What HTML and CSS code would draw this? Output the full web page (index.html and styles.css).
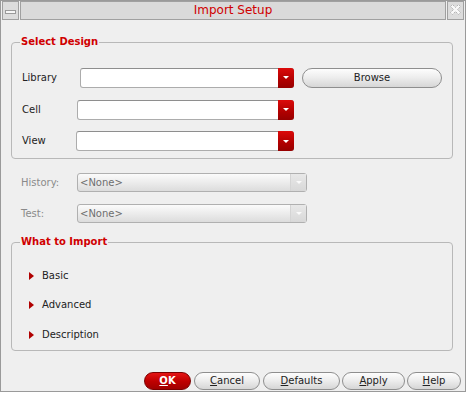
FILE: index.html
```html
<!DOCTYPE html>
<html lang="en">
<head>
    <meta charset="UTF-8">
    <title>Import Setup</title>
    <link rel="stylesheet" href="styles.css">
</head>
<body>
    <div class="window">
        <div class="titlebar">
            <div class="tb-btn">
                <svg width="15" height="17" viewBox="0 0 15 17">
                    <rect x="2.5" y="8.5" width="10" height="3" fill="#f6f6f6" stroke="#9a9a9a"/>
                </svg>
            </div>
            <div class="tb-title">Import Setup</div>
            <div class="tb-btn">
                <svg width="15" height="17" viewBox="0 0 15 17">
                    <polygon points="2.5,4.5 4.5,2.5 7.5,5.5 10.5,2.5 12.5,4.5 9.5,7.5 12.5,10.5 10.5,12.5 7.5,9.5 4.5,12.5 2.5,10.5 5.5,7.5" fill="#f8f8f8" stroke="#b4b4b4" stroke-dasharray="2 1"/>
                </svg>
            </div>
        </div>

        <div class="content">
            <fieldset class="group group-design">
                <legend>Select Design</legend>
                <div class="design-grid">
                    <label class="field-label">Library</label>
                    <div class="combo combo-library"><span class="combo-arrow"></span></div>
                    <button class="btn btn-browse">Browse</button>

                    <label class="field-label">Cell</label>
                    <div class="combo combo-cell"><span class="combo-arrow"></span></div>
                    <span></span>

                    <label class="field-label">View</label>
                    <div class="combo"><span class="combo-arrow"></span></div>
                    <span></span>
                </div>
            </fieldset>

            <div class="opt-rows">
                <div class="opt-row">
                    <label class="opt-label">History:</label>
                    <div class="combo-off"><span class="combo-off-text">&lt;None&gt;</span><span class="combo-off-arrow"></span></div>
                </div>
                <div class="opt-row">
                    <label class="opt-label">Test:</label>
                    <div class="combo-off"><span class="combo-off-text">&lt;None&gt;</span><span class="combo-off-arrow"></span></div>
                </div>
            </div>

            <fieldset class="group group-import">
                <legend>What to Import</legend>
                <ul class="sections">
                    <li><span class="marker"></span>Basic</li>
                    <li><span class="marker"></span>Advanced</li>
                    <li><span class="marker"></span>Description</li>
                </ul>
            </fieldset>
        </div>

        <div class="actions">
            <button class="btn btn-ok"><u>O</u>K</button>
            <button class="btn btn-cancel"><u>C</u>ancel</button>
            <button class="btn btn-defaults"><u>D</u>efaults</button>
            <button class="btn btn-apply"><u>A</u>pply</button>
            <button class="btn btn-help"><u>H</u>elp</button>
        </div>
    </div>
</body>
</html>
```

FILE: styles.css
```css
:root {
    --face: #efefef;
    --frame: #9a9a9a;
    --red: #d00000;
    --text: #222222;
    --muted: #8a8a8a;
    --group-border: #b8b8b8;
}

* {
    box-sizing: border-box;
}

body {
    margin: 0;
    background: #ffffff;
    font-family: "DejaVu Sans", sans-serif;
    font-size: 10px;
    color: var(--text);
}

.window {
    width: 466px;
    height: 392px;
    border: 1px solid var(--frame);
    background: var(--face);
    display: flex;
    flex-direction: column;
}

/* title bar */
.titlebar {
    display: flex;
    gap: 1px;
    height: 19px;
    padding: 0 1px;
}

.tb-btn {
    width: 17px;
    border: 1px solid #a0a0a0;
    background: #dcdcdc;
    display: flex;
    align-items: center;
    justify-content: center;
}

.tb-title {
    flex: 1;
    border: 1px solid #a0a0a0;
    background: #dadada;
    color: var(--red);
    font-size: 12px;
    line-height: 17px;
    text-align: center;
}

.content {
    padding: 0 12px 0 10px;
}

/* group boxes */
.group {
    margin: 16px 0 0;
    padding: 19px 10px 7px;
    border: 1px solid var(--group-border);
    border-radius: 4px;
    min-width: 0;
}

.group legend {
    margin-left: -2px;
    padding: 0 1px;
    font-weight: bold;
    line-height: 12px;
    color: var(--red);
}

.design-grid {
    display: grid;
    grid-template-columns: 54px 218px 148px;
    row-gap: 11.5px;
    align-items: center;
}

.field-label {
    line-height: 20px;
}

.combo {
    height: 20px;
    background: #ffffff;
    border: 1px solid #acacac;
    border-top-color: #8e8e8e;
    border-radius: 3px;
    display: flex;
    justify-content: flex-end;
}

.combo-library {
    margin-left: 4px;
}

.combo-cell {
    margin-left: 1px;
}

.combo-arrow {
    width: 16px;
    margin: -1px -1px -1px 0;
    border-radius: 0 3px 3px 0;
    background: linear-gradient(#dc0a0a, #b00000 60%, #960000);
    display: flex;
    align-items: center;
    justify-content: center;
}

.combo-arrow::after {
    content: "";
    border-left: 3px solid transparent;
    border-right: 3px solid transparent;
    border-top: 3px solid #ffffff;
}

/* buttons */
.btn {
    height: 18px;
    padding: 0;
    border: 1px solid #8e8e8e;
    border-radius: 9px;
    background: linear-gradient(#fdfdfd, #ececec 50%, #d6d6d6);
    font-family: inherit;
    font-size: 10px;
    color: var(--text);
    line-height: 16px;
}

.btn-browse {
    height: 20px;
    border-radius: 10px;
    margin: 1px 0 0 8px;
}

/* disabled option rows */
.opt-rows {
    margin-top: 14px;
    padding-left: 10px;
    display: flex;
    flex-direction: column;
    gap: 12px;
}

.opt-row {
    display: flex;
    align-items: center;
}

.opt-label {
    width: 56px;
    color: var(--muted);
}

.combo-off {
    width: 230px;
    height: 19px;
    border: 1px solid #b0b0b0;
    border-radius: 3px;
    background: linear-gradient(#fbfbfb, #ececec 50%, #dcdcdc);
    display: flex;
}

.combo-off-text {
    flex: 1;
    padding-left: 2px;
    line-height: 17px;
    color: #6e6e6e;
}

.combo-off-arrow {
    width: 16px;
    border-left: 1px solid #d4d4d4;
    background: linear-gradient(#e8e8e8, #d8d8d8);
    display: flex;
    align-items: center;
    justify-content: center;
}

.combo-off-arrow::after {
    content: "";
    border-left: 3px solid transparent;
    border-right: 3px solid transparent;
    border-top: 3px solid #fafafa;
}

/* what to import */
.group-import {
    margin-top: 13px;
    padding-top: 21px;
    padding-bottom: 8px;
}

.sections {
    list-style: none;
    margin: 0;
    padding: 0;
    display: flex;
    flex-direction: column;
    gap: 15.3px;
}

.sections li {
    display: flex;
    align-items: center;
    line-height: 14px;
}

.marker {
    margin-left: 7px;
    margin-right: 8px;
    border-top: 4px solid transparent;
    border-bottom: 4px solid transparent;
    border-left: 5px solid #b00000;
}

/* bottom buttons */
.actions {
    margin-top: auto;
    padding: 0 4px 1px 0;
    display: flex;
    justify-content: flex-end;
    gap: 3px;
}

.btn-ok {
    width: 47px;
    border-color: #7a0000;
    background: linear-gradient(#e41414, #c00000 50%, #a00000);
    color: #ffffff;
    font-weight: bold;
}

.btn-cancel {
    width: 66px;
}

.btn-defaults {
    width: 77px;
}

.btn-apply {
    width: 63px;
    margin-left: -1px;
}

.btn-help {
    width: 54px;
    margin-left: -1px;
}
```
